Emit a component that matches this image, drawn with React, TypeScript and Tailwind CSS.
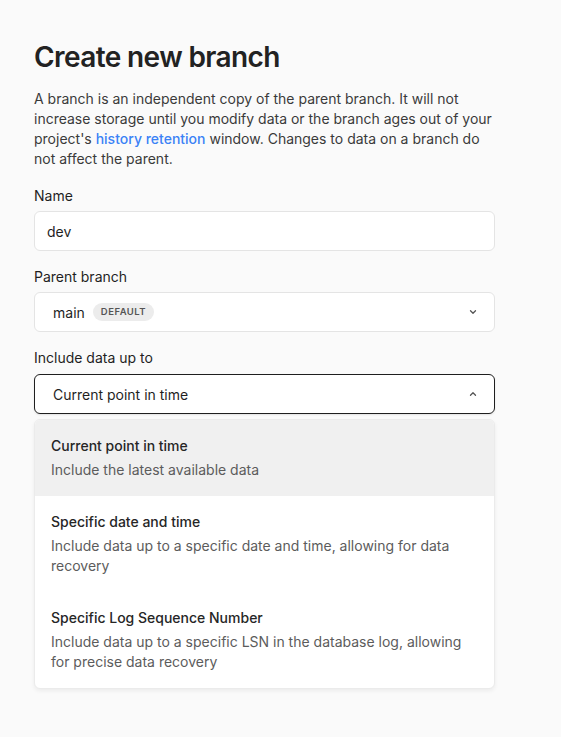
import React from 'react'

const options = [
  { title: 'Current point in time', desc: 'Include the latest available data', active: true },
  {
    title: 'Specific date and time',
    desc: 'Include data up to a specific date and time, allowing for data recovery',
  },
  {
    title: 'Specific Log Sequence Number',
    desc: 'Include data up to a specific LSN in the database log, allowing for precise data recovery',
  },
]

const Chevron = ({ up }: { up?: boolean }) => (
  <svg width="12" height="12" viewBox="0 0 12 12" fill="none" className="text-[#555]">
    <path
      d={up ? 'M3.5 7.25 6 4.75l2.5 2.5' : 'M3.5 4.75 6 7.25l2.5-2.5'}
      stroke="currentColor"
      strokeWidth="1.3"
      strokeLinecap="round"
      strokeLinejoin="round"
    />
  </svg>
)

export default function App() {
  return (
    <div className="min-h-[737px] bg-[#fafafa] font-['Inter',sans-serif] text-[#1f1f1f]">
      <div className="w-[461px] ml-[34px] pt-[38px]">
        <h1 className="text-[28px] leading-[38px] font-semibold tracking-[-0.6px] text-[#222]">Create new branch</h1>
        <p className="mt-[13px] text-[14px] leading-5 text-[#3a3a3a]">
          A branch is an independent copy of the parent branch. It will not increase storage until you modify data
          or the branch ages out of your project's{' '}
          <a className="text-[#3b82f6] font-medium">history retention</a> window. Changes to data on a branch do not
          affect the parent.
        </p>

        <label className="block mt-[17px] text-[14px] leading-5">Name</label>
        <div className="mt-[5px] h-10 rounded-md border border-[#e4e4e4] bg-white px-3 flex items-center text-[14px]">
          dev
        </div>

        <label className="block mt-4 text-[14px] leading-5">Parent branch</label>
        <div className="mt-[5px] h-10 rounded-md border border-[#e4e4e4] bg-white pl-[18px] pr-[15px] flex items-center justify-between text-[14px]">
          <div className="flex items-center gap-2">
            <span>main</span>
            <span className="rounded-full bg-[#ececec] px-2 py-[2px] text-[9.5px] font-semibold tracking-[0.5px] text-[#555]">
              DEFAULT
            </span>
          </div>
          <Chevron />
        </div>

        <label className="block mt-4 text-[14px] leading-5">Include data up to</label>
        <div className="mt-[6px] h-10 rounded-md border border-[#1f1f1f] bg-white pl-[18px] pr-[15px] flex items-center justify-between text-[14px] shadow-[0_1px_2px_rgba(0,0,0,0.1)]">
          <span>Current point in time</span>
          <Chevron up />
        </div>

        <div className="mt-[5px] rounded-md border border-[#ebebeb] bg-white shadow-[0_2px_4px_rgba(0,0,0,0.06)] overflow-hidden">
          {options.map((o) => (
            <div key={o.title} className={`px-4 py-4 ${o.active ? 'bg-[#f0f0f0]' : ''}`}>
              <div className="text-[14px] leading-5 font-medium text-[#262626]">{o.title}</div>
              <div className="mt-[4px] text-[14px] leading-5 text-[#5c5c5c]">{o.desc}</div>
            </div>
          ))}
        </div>
      </div>
    </div>
  )
}
